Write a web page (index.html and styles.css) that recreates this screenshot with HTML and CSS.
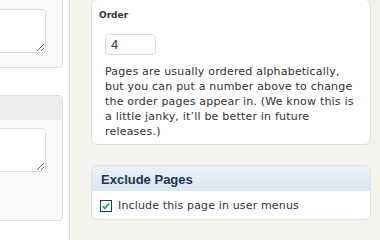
FILE: index.html
```html
<!DOCTYPE html>
<html lang="en">
<head>
    <meta charset="UTF-8">
    <title>Page Attributes</title>
    <link rel="stylesheet" href="styles.css">
</head>
<body>
    <div class="screen">
        <div class="sidebar">
            <div class="box box-top">
                <textarea class="field"></textarea>
            </div>
            <div class="box">
                <div class="box-head"></div>
                <div class="box-body">
                    <textarea class="field"></textarea>
                </div>
            </div>
        </div>

        <div class="main">
            <div class="panel panel-order">
                <div class="field-label">Order</div>
                <input type="text" class="order-input" value="4">
                <p class="hint">Pages are usually ordered alphabetically, but you can put a number above to change the order pages appear in. (We know this is a little janky, it’ll be better in future releases.)</p>
            </div>

            <div class="panel panel-exclude">
                <div class="panel-head">Exclude Pages</div>
                <label class="check-row">
                    <span class="check-box">
                        <svg width="12" height="12" viewBox="0 0 12 12">
                            <rect x="0.5" y="0.5" width="11" height="11" fill="#fff" stroke="#1e3d5c"/>
                            <path d="M2.8 6.2l2.1 2.2 4.2-4.9" fill="none" stroke="#27a62a" stroke-width="1.8"/>
                        </svg>
                    </span>
                    Include this page in user menus
                </label>
            </div>
        </div>
    </div>
</body>
</html>
```

FILE: styles.css
```css
body {
    margin: 0;
    padding: 0;
    font-family: "DejaVu Sans", Verdana, sans-serif;
    font-size: 11px;
    color: #333;
    background: #f4f3ee;
    overflow: hidden;
}

.screen {
    display: flex;
    height: 240px;
}

/* left column */
.sidebar {
    width: 69px;
    flex-shrink: 0;
    background: #fff;
    border-right: 1px solid #dcdcdc;
}

.box {
    width: 263px;
    margin-left: -200px;
    box-sizing: border-box;
    background: #f9f9f9;
    border: 1px solid #dfdfdf;
    border-radius: 4px;
}

.box-top {
    margin-top: -10px;
    padding: 18px 16px 14px 20px;
}

.box + .box {
    margin-top: 27px;
}

.box-head {
    height: 24px;
    background: #eeeeee;
}

.box-body {
    padding: 8px 16px 48px 20px;
}

.field {
    display: block;
    width: 100%;
    height: 44px;
    box-sizing: border-box;
    border: 1px solid #dcdcdc;
    border-radius: 4px;
    background: #fff;
    margin: 0;
}

/* right column */
.main {
    flex: 1;
    padding-left: 21px;
}

.panel {
    width: 280px;
    box-sizing: border-box;
    background: #fff;
    border: 1px solid #dfdfdf;
    border-radius: 6px;
}

.panel-order {
    margin-top: -1px;
    padding: 9px 7px 5px;
}

.field-label {
    font-weight: bold;
    font-size: 9px;
    line-height: 12px;
    color: #333;
}

.order-input {
    display: block;
    width: 51px;
    height: 21px;
    box-sizing: border-box;
    margin: 13px 0 0 6px;
    padding: 0 5px;
    border: 1px solid #dcdcdc;
    border-radius: 4px;
    font-family: "Liberation Sans", Arial, sans-serif;
    font-size: 13px;
    color: #333;
}

.hint {
    margin: 9px 0 0 6px;
    line-height: 15px;
    letter-spacing: 0.2px;
    width: 252px;
}

.panel-exclude {
    margin-top: 20px;
    overflow: hidden;
}

.panel-head {
    height: 25px;
    padding-left: 9px;
    background: linear-gradient(#ebf1f9, #dae6f2);
    font-family: "Liberation Sans", Arial, sans-serif;
    font-weight: bold;
    font-size: 13px;
    line-height: 27px;
    color: #1c3652;
}

.check-row {
    display: flex;
    align-items: center;
    gap: 6px;
    height: 28px;
    padding-left: 8px;
    padding-top: 1px;
    box-sizing: border-box;
    letter-spacing: 0.15px;
}

.check-box {
    display: flex;
}
```
